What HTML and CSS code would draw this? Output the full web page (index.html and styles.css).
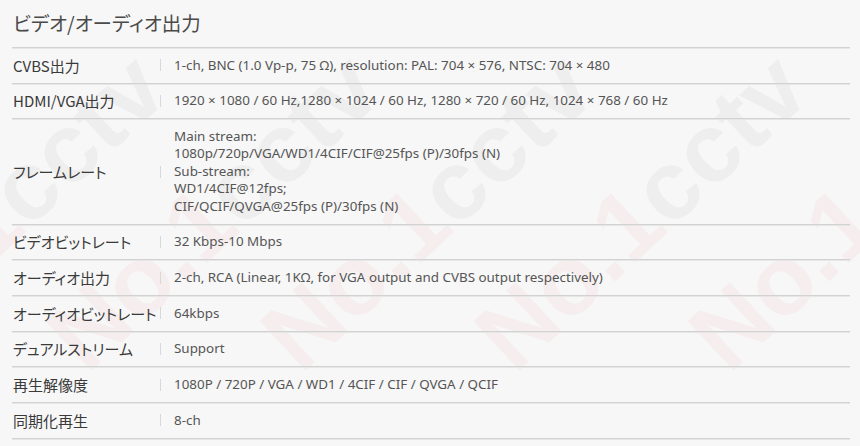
FILE: index.html
```html
<!DOCTYPE html>
<html lang="ja">
<head>
<meta charset="utf-8">
<title>ビデオ/オーディオ出力</title>
<link rel="stylesheet" href="styles.css">
</head>
<body>
<div class="page">
  <div class="watermarks" aria-hidden="true">
    <div class="wm wm-1"><span class="wm-no">No.1</span><span class="wm-cc">cctv</span></div>
    <div class="wm wm-2"><span class="wm-no">No.1</span><span class="wm-cc">cctv</span></div>
    <div class="wm wm-3"><span class="wm-no">No.1</span><span class="wm-cc">cctv</span></div>
    <div class="wm wm-4"><span class="wm-no">No.1</span><span class="wm-cc">cctv</span></div>
    <div class="wm wm-5"><span class="wm-no">No.1</span><span class="wm-cc">cctv</span></div>
  </div>
  <section class="spec">
    <h2 class="spec-title">ビデオ/オーディオ出力</h2>
    <div class="spec-table">
      <div class="row"><div class="label">CVBS出力</div><div class="sep"></div><div class="value">1-ch, BNC (1.0 Vp-p, 75 Ω), resolution: PAL: 704 × 576, NTSC: 704 × 480</div></div>
      <div class="row"><div class="label">HDMI/VGA出力</div><div class="sep"></div><div class="value">1920 × 1080 / 60 Hz,1280 × 1024 / 60 Hz, 1280 × 720 / 60 Hz, 1024 × 768 / 60 Hz</div></div>
      <div class="row"><div class="label">フレームレート</div><div class="sep"></div><div class="value">Main stream:<br>1080p/720p/VGA/WD1/4CIF/CIF@25fps (P)/30fps (N)<br>Sub-stream:<br>WD1/4CIF@12fps;<br>CIF/QCIF/QVGA@25fps (P)/30fps (N)</div></div>
      <div class="row"><div class="label">ビデオビットレート</div><div class="sep"></div><div class="value">32 Kbps-10 Mbps</div></div>
      <div class="row"><div class="label">オーディオ出力</div><div class="sep"></div><div class="value">2-ch, RCA (Linear, 1KΩ, for VGA output and CVBS output respectively)</div></div>
      <div class="row"><div class="label">オーディオビットレート</div><div class="sep"></div><div class="value">64kbps</div></div>
      <div class="row"><div class="label">デュアルストリーム</div><div class="sep"></div><div class="value">Support</div></div>
      <div class="row"><div class="label">再生解像度</div><div class="sep"></div><div class="value">1080P / 720P / VGA / WD1 / 4CIF / CIF / QVGA / QCIF</div></div>
      <div class="row"><div class="label">同期化再生</div><div class="sep"></div><div class="value">8-ch</div></div>
    </div>
  </section>
</div>
</body>
</html>
```

FILE: styles.css
```css
html, body {
  margin: 0;
  padding: 0;
  background: #f7f7f7;
}

.page {
  position: relative;
  width: 860px;
  height: 446px;
  overflow: hidden;
}

/* watermark layer */
.watermarks {
  position: absolute;
  inset: 0;
  z-index: 0;
  pointer-events: none;
}

.wm {
  position: absolute;
  top: 288px;
  font-family: "Liberation Sans", Arial, sans-serif;
  font-weight: 700;
  font-size: 98px;
  line-height: 98px;
  white-space: nowrap;
  transform-origin: 0 100%;
  transform: rotate(-43deg);
}

.wm-no { color: rgba(225, 50, 50, 0.045); }
.wm-cc { color: rgba(0, 0, 0, 0.035); }

.wm-1 { left: -117px; }
.wm-2 { left: 97px; }
.wm-3 { left: 311px; }
.wm-4 { left: 525px; }
.wm-5 { left: 739px; }

/* spec table */
.spec {
  position: relative;
  z-index: 1;
  width: 838px;
  padding-left: 12px;
}

.spec-title {
  box-sizing: border-box;
  height: 48px;
  margin: 0;
  padding: 10px 0 0 1px;
  font-family: "Noto Sans CJK JP", sans-serif;
  font-feature-settings: "palt";
  font-weight: 400;
  font-size: 19.5px;
  line-height: 26px;
  color: #4a4a4a;
  border-bottom: 1px solid #d2d2d2;
  box-shadow: 0 1px 0 #e6e6e6;
}

.row {
  display: grid;
  grid-template-columns: 148px 1px 1fr;
  align-items: center;
  padding: 8.65px 0;
  border-bottom: 1px solid #d2d2d2;
  box-shadow: 0 1px 0 #e6e6e6;
}

.label {
  padding-left: 1px;
  font-family: "Noto Sans CJK JP", sans-serif;
  font-feature-settings: "palt";
  font-size: 15px;
  line-height: 17.4px;
  color: #3a3a3a;
  white-space: nowrap;
}

.sep {
  width: 1px;
  height: 12px;
  background: #d8d8d8;
}

.value {
  padding-left: 13px;
  font-family: "Noto Sans", "Noto Sans CJK JP", sans-serif;
  font-size: 13.4px;
  line-height: 17.4px;
  color: #555;
}
```
